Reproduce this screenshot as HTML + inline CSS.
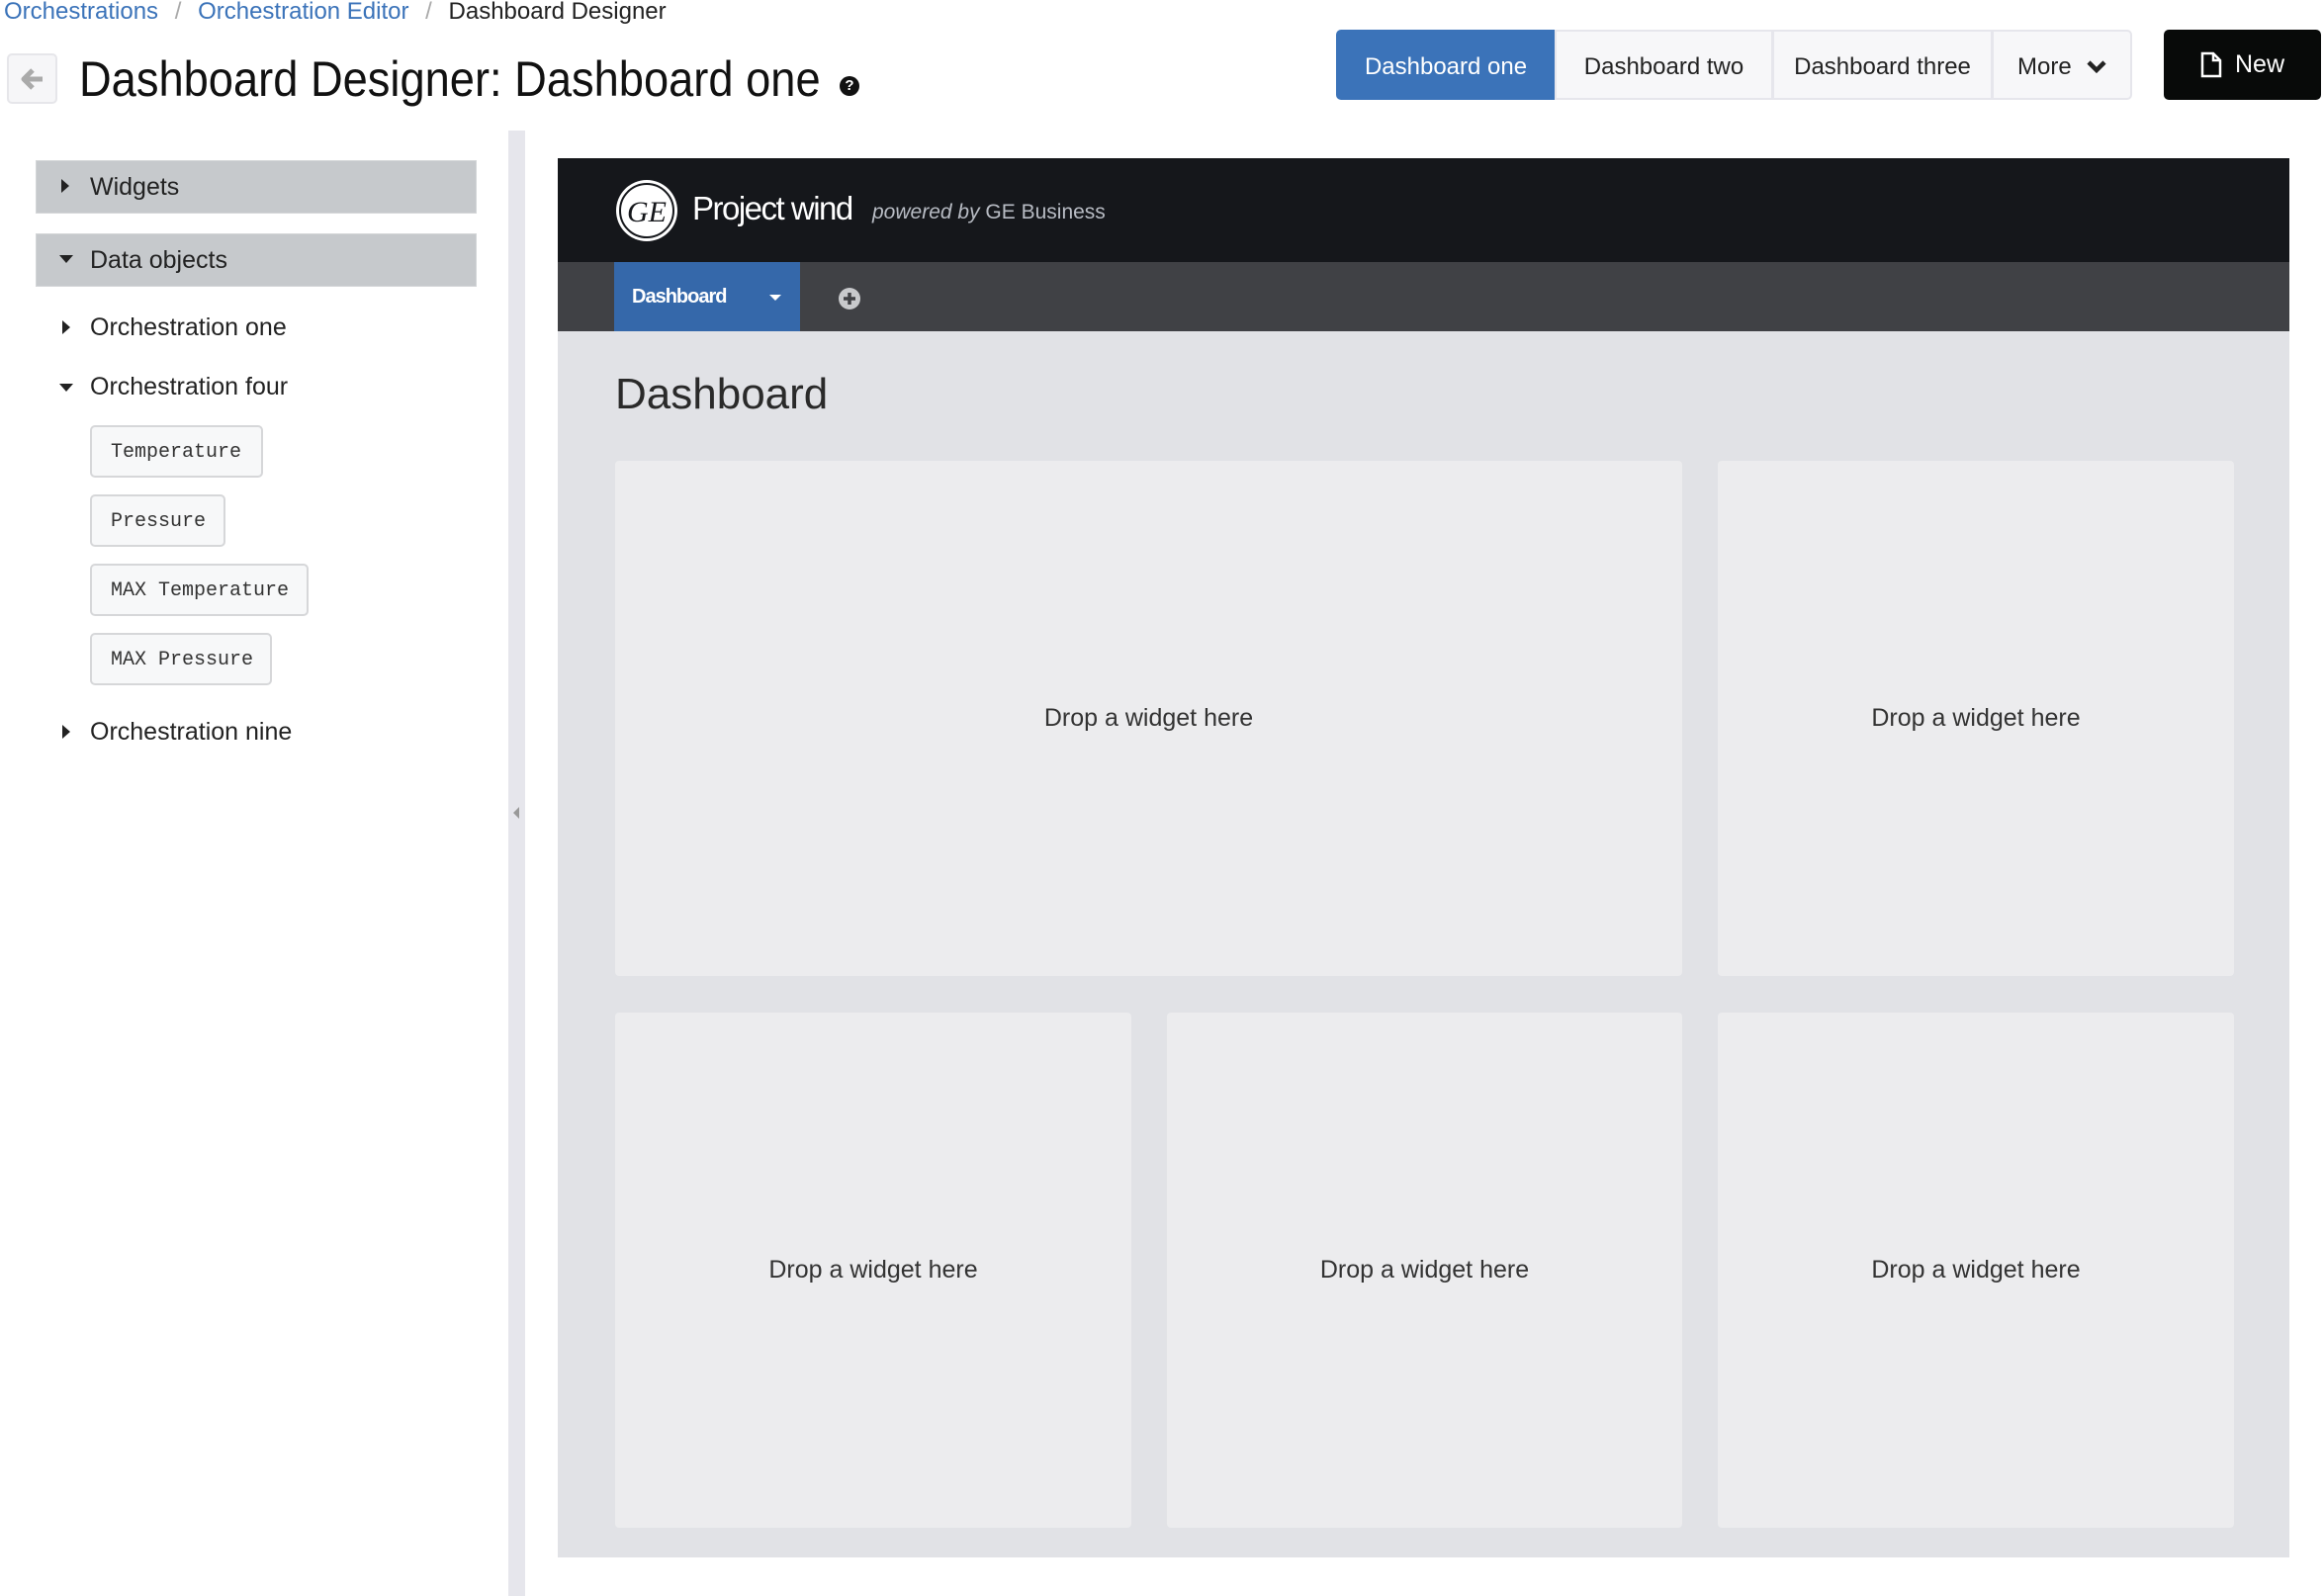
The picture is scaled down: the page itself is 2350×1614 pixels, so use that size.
<!DOCTYPE html>
<html><head><meta charset="utf-8"><style>
*{box-sizing:border-box;margin:0;padding:0}
body{width:2350px;height:1614px;background:#fff;position:relative;overflow:hidden;font-family:"Liberation Sans Narrow","Liberation Sans",sans-serif;color:#222}
.a{position:absolute;white-space:nowrap}
.bar{position:absolute;left:36px;width:446px;height:54px;background:#c6c9cc;border:1px solid #d4d6d8;font-size:25px;line-height:52px;padding-left:54px;color:#222}
.tri{position:absolute;width:0;height:0}
.tr{border-top:7px solid transparent;border-bottom:7px solid transparent;border-left:8px solid #222}
.td{border-left:7px solid transparent;border-right:7px solid transparent;border-top:8px solid #222}
.tag{position:absolute;left:91px;height:53px;border:2px solid #d6d7d9;border-radius:5px;background:#f7f8f9;font-family:"Liberation Mono",monospace;font-size:20px;line-height:51px;padding-left:19px;color:#333}
.tab{position:absolute;top:30px;height:71px;font-size:24px;line-height:71px;text-align:center;color:#222;background:#f7f7f9;border:2px solid #e6e6ec}
.card{position:absolute;background:#ececee;border-radius:4px;font-family:"Liberation Sans",sans-serif;font-size:25px;color:#333;display:flex;align-items:center;justify-content:center}
.sq{display:inline-block;transform:scaleX(0.92);transform-origin:left}
</style></head><body>
<div class="a" style="left:4px;top:-3px;font-size:24px;line-height:30px;color:#3b73b9">Orchestrations <span style="color:#aaa;margin:0 10px">/</span> Orchestration Editor <span style="color:#aaa;margin:0 10px">/</span> <span style="color:#222">Dashboard Designer</span></div>
<div class="a" style="left:7px;top:54px;width:51px;height:51px;border:2px solid #e6e6ea;border-radius:5px;background:#f6f6f8"></div>
<svg class="a" style="left:20px;top:68px" width="26" height="24" viewBox="0 0 26 24"><path d="M13 3 L4 12 L13 21 M4 12 H23" stroke="#aaa" stroke-width="5" fill="none" stroke-linejoin="round"/></svg>
<div class="a" style="left:80px;top:48px;font-size:50px;line-height:64px;color:#111;transform:scaleX(0.905);transform-origin:left">Dashboard Designer: Dashboard one</div>
<div class="a" style="left:849px;top:77px;width:20px;height:20px;border-radius:50%;background:#111;color:#fff;font:bold 15px/20px 'Liberation Sans',sans-serif;text-align:center">?</div>

<div class="tab" style="left:1351px;width:222px;background:#3b73b9;color:#fff;border-color:#3b73b9;border-radius:5px 0 0 5px">Dashboard one</div>
<div class="tab" style="left:1572px;width:221px">Dashboard two</div>
<div class="tab" style="left:1792px;width:223px">Dashboard three</div>
<div class="tab" style="left:2014px;width:142px;border-radius:0 5px 5px 0;text-align:left;padding-left:24px">More <svg style="position:absolute;left:93px;top:28px" width="22" height="16" viewBox="0 0 22 16"><path d="M3 3 L11 11 L19 3" stroke="#222" stroke-width="4.5" fill="none"/></svg></div>
<div class="a" style="left:2188px;top:30px;width:159px;height:71px;background:#080a09;border-radius:5px;color:#fff;font-size:25px;line-height:71px;padding-left:72px">New
<svg style="position:absolute;left:37px;top:22px" width="22" height="27" viewBox="0 0 22 27"><path d="M2 2 H13 L20 9 V25 H2 Z M13 2 V9 H20" stroke="#fff" stroke-width="2.5" fill="none"/></svg></div>

<div class="bar" style="top:162px">Widgets</div><div class="tri tr" style="left:62px;top:181px"></div>
<div class="bar" style="top:236px">Data objects</div><div class="tri td" style="left:60px;top:258px"></div>
<div class="a" style="left:91px;top:314px;font-size:25px;line-height:34px">Orchestration one</div><div class="tri tr" style="left:63px;top:324px"></div>
<div class="a" style="left:91px;top:374px;font-size:25px;line-height:34px">Orchestration four</div><div class="tri td" style="left:60px;top:388px"></div>
<div class="tag" style="top:430px;width:175px">Temperature</div>
<div class="tag" style="top:500px;width:137px">Pressure</div>
<div class="tag" style="top:570px;width:221px">MAX Temperature</div>
<div class="tag" style="top:640px;width:184px">MAX Pressure</div>
<div class="a" style="left:91px;top:723px;font-size:25px;line-height:34px">Orchestration nine</div><div class="tri tr" style="left:63px;top:733px"></div>

<div class="a" style="left:514px;top:132px;width:17px;height:1482px;background:#e6e6ec"></div>
<div class="tri" style="left:519px;top:816px;border-top:6px solid transparent;border-bottom:6px solid transparent;border-right:6px solid #999"></div>

<div class="a" style="left:564px;top:160px;width:1751px;height:1415px;background:#e1e2e6">
 <div class="a" style="left:0;top:0;width:1751px;height:105px;background:#15171b"></div>
 <svg class="a" style="left:57px;top:20px" width="66" height="66" viewBox="0 0 66 66"><circle cx="33" cy="33" r="31" fill="#fff"/><circle cx="33" cy="33" r="27" fill="none" stroke="#15171b" stroke-width="2"/><text x="33" y="44" font-family="Liberation Serif,serif" font-style="italic" font-size="30" text-anchor="middle" fill="#15171b">GE</text></svg>
 <div class="a" style="left:136px;top:30px;font-size:33px;line-height:42px;color:#fff;font-family:'Liberation Sans',sans-serif;letter-spacing:-1.5px">Project wind</div>
 <div class="a" style="left:318px;top:41px;font-size:21px;line-height:28px;color:#b8bcc4;font-family:'Liberation Sans',sans-serif"><i>powered by</i> GE Business</div>
 <div class="a" style="left:0;top:105px;width:1751px;height:70px;background:#404145"></div>
 <div class="a" style="left:57px;top:105px;width:188px;height:70px;background:#3568aa;color:#fff;font:bold 20px/70px 'Liberation Sans',sans-serif;padding-left:18px;letter-spacing:-1px">Dashboard</div>
 <div class="tri" style="left:214px;top:138px;border-left:6px solid transparent;border-right:6px solid transparent;border-top:6px solid #fff"></div>
 <svg class="a" style="left:283px;top:130px" width="24" height="24" viewBox="0 0 24 24"><circle cx="12" cy="12" r="11" fill="#c8c9cc"/><path d="M12 6 V18 M6 12 H18" stroke="#404145" stroke-width="3.5"/></svg>
 <div class="a" style="left:58px;top:212px;font:44px/54px 'Liberation Sans',sans-serif;color:#2a2a2a">Dashboard</div>
 <div class="card" style="left:58px;top:306px;width:1079px;height:521px">Drop a widget here</div>
 <div class="card" style="left:1173px;top:306px;width:522px;height:521px">Drop a widget here</div>
 <div class="card" style="left:58px;top:864px;width:522px;height:521px">Drop a widget here</div>
 <div class="card" style="left:616px;top:864px;width:521px;height:521px">Drop a widget here</div>
 <div class="card" style="left:1173px;top:864px;width:522px;height:521px">Drop a widget here</div>
</div>
</body></html>
